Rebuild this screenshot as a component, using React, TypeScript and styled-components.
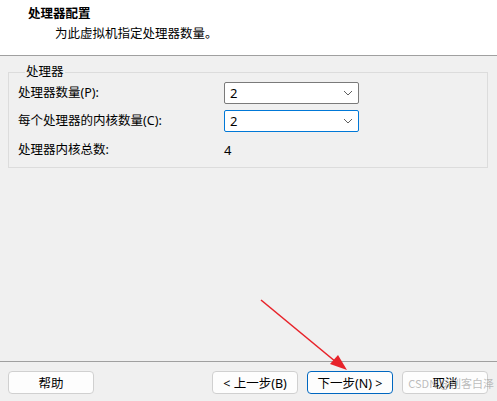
import React from "react";
import styled, { createGlobalStyle } from "styled-components";

const Global = createGlobalStyle`
  html, body { margin: 0; padding: 0; background: #f0f0f0; }
  body { font-family: "Noto Sans", "Noto Sans CJK SC", sans-serif; }
`;

const Window = styled.div`
  position: relative;
  width: 497px;
  height: 401px;
  background: #f0f0f0;
  display: flex;
  flex-direction: column;
  overflow: hidden;
  color: #000;
  font-size: 12px;
`;

const Header = styled.div`
  height: 56px;
  background: #ffffff;
  border-bottom: 1px solid #a0a0a0;
  padding: 7px 0 0 28px;
  box-sizing: border-box;
  display: flex;
  flex-direction: column;
  gap: 6px;
`;

const Title = styled.div`
  font-weight: 700;
  font-size: 12.5px;
  line-height: 14px;
`;

const Subtitle = styled.div`
  font-size: 12.5px;
  line-height: 14px;
  padding-left: 27px;
`;

const Main = styled.div`
  flex: 1;
  padding: 9px 9px 0 8px;
`;

const Group = styled.fieldset`
  margin: 0;
  border: 1px solid #dcdcdc;
  padding: 3px 8px 5px 9px;
  display: grid;
  grid-template-columns: 206px 135px;
  grid-template-rows: 22px 22px 24px;
  row-gap: 6px;
  align-items: center;
`;

const Legend = styled.legend`
  padding: 0 1px;
  margin-left: 7px;
  font-size: 12.5px;
  line-height: 14px;
`;

const Label = styled.div`
  font-size: 12.5px;
  line-height: 14px;
`;

const Combo = styled.div<{ $focused?: boolean }>`
  height: 22px;
  box-sizing: border-box;
  background: #fff;
  border: 1px solid ${(p) => (p.$focused ? "#0078d7" : "#7a7a7a")};
  border-radius: 2px;
  display: flex;
  align-items: center;
  justify-content: space-between;
  padding: 0 5px 0 5px;
  font-size: 13px;
`;

const Value = styled.div`
  font-size: 13px;
  line-height: 14px;
`;

const Footer = styled.div`
  border-top: 1px solid #a0a0a0;
  height: 40px;
  box-sizing: border-box;
  padding: 9px 9px 0 8px;
  display: flex;
  gap: 9px;
`;

const Spacer = styled.div`
  flex: 1;
`;

const Button = styled.button<{ $primary?: boolean }>`
  width: 86px;
  height: 23px;
  box-sizing: border-box;
  background: #fdfdfd;
  border: 1px solid ${(p) => (p.$primary ? "#0067c0" : "#d0d0d0")};
  border-radius: 4px;
  font-family: "Noto Sans", "Noto Sans CJK SC", sans-serif;
  font-size: 12.5px;
  color: #000;
  padding: 0;
  display: flex;
  align-items: center;
  justify-content: center;
`;

const ArrowOverlay = styled.svg`
  position: absolute;
  left: 0;
  top: 0;
  pointer-events: none;
`;

const Watermark = styled.div`
  position: absolute;
  right: 3px;
  bottom: 10px;
  font-size: 11px;
  color: rgba(160, 160, 160, 0.7);
  font-family: "Noto Sans CJK SC", sans-serif;
  pointer-events: none;
`;

const Chevron = () => (
  <svg width="10" height="6" viewBox="0 0 10 6">
    <path d="M1 1 L5 5 L9 1" fill="none" stroke="#606060" strokeWidth="1" />
  </svg>
);

export default function App() {
  return (
    <Window>
      <Global />
      <Header>
        <Title>处理器配置</Title>
        <Subtitle>为此虚拟机指定处理器数量。</Subtitle>
      </Header>
      <Main>
        <Group>
          <Legend>处理器</Legend>
          <Label>处理器数量(P):</Label>
          <Combo>
            <span>2</span>
            <Chevron />
          </Combo>
          <Label>每个处理器的内核数量(C):</Label>
          <Combo $focused>
            <span>2</span>
            <Chevron />
          </Combo>
          <Label>处理器内核总数:</Label>
          <Value>4</Value>
        </Group>
      </Main>
      <Footer>
        <Button>帮助</Button>
        <Spacer />
        <Button>&lt; 上一步(B)</Button>
        <Button $primary>下一步(N) &gt;</Button>
        <Button>取消</Button>
      </Footer>
      <Watermark>CSDN @创客白泽</Watermark>
      <ArrowOverlay width="497" height="401" viewBox="0 0 497 401">
        <line x1="261" y1="300" x2="336" y2="362" stroke="#e8232a" strokeWidth="1.6" />
        <polygon points="347,370 330,364 338,355" fill="#e8232a" />
      </ArrowOverlay>
    </Window>
  );
}
